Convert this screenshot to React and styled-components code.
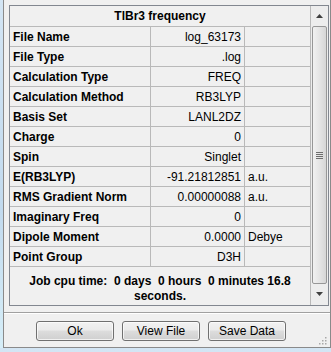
import styled, { createGlobalStyle } from "styled-components";

const GlobalStyle = createGlobalStyle`
  html, body {
    margin: 0;
    padding: 0;
    background: linear-gradient(180deg, #d3e5f4 0%, #c2daee 60%, #d6eef8 100%);
    font-family: "Liberation Sans", Arial, sans-serif;
  }
`;

const Window = styled.div`
  position: relative;
  margin-left: 3px;
  width: 328px;
  height: 348px;
  box-sizing: border-box;
  background: #f0f0f0;
  border: 1px solid #8a8a8a;
  border-top: none;
  padding: 5px 0 0 5px;
  display: flex;
  flex-direction: column;
`;

const Panel = styled.div`
  width: 320px;
  height: 301px;
  box-sizing: border-box;
  border: 1px solid #828790;
  display: flex;
  background: #f0f0f0;
`;

const Table = styled.div`
  width: 301px;
  display: flex;
  flex-direction: column;
`;

const TitleRow = styled.div`
  height: 21px;
  box-sizing: border-box;
  border-bottom: 1px solid #b9b9b9;
  border-right: 1px solid #b9b9b9;
  display: flex;
  align-items: center;
  justify-content: center;
  font-size: 12px;
  font-weight: bold;
  color: #000;
`;

const Row = styled.div`
  display: grid;
  grid-template-columns: 141px 94px 66px;
  height: 20px;
`;

const Cell = styled.div`
  box-sizing: border-box;
  border-right: 1px solid #b9b9b9;
  border-bottom: 1px solid #b9b9b9;
  display: flex;
  align-items: center;
  font-size: 12px;
  color: #000;
  white-space: nowrap;
  overflow: hidden;
  font-weight: ${(p) => (p.$bold ? "bold" : "normal")};
  justify-content: ${(p) => (p.$right ? "flex-end" : "flex-start")};
  padding: ${(p) => (p.$right ? "0 3px 0 0" : "0 0 0 3px")};
`;

const CpuTime = styled.div`
  flex: 1;
  box-sizing: border-box;
  border-right: 1px solid #b9b9b9;
  padding: 7px 12px 0 12px;
  font-size: 12px;
  font-weight: bold;
  line-height: 15px;
  text-align: center;
  white-space: pre-wrap;
  color: #000;
`;

const Scrollbar = styled.div`
  width: 17px;
  display: flex;
  flex-direction: column;
  align-items: center;
  background: #ededed;
`;

const ArrowBox = styled.div`
  height: ${(p) => p.$h}px;
  width: 17px;
  display: flex;
  align-items: center;
  justify-content: center;
`;

const Thumb = styled.div`
  width: 15px;
  height: 258px;
  box-sizing: border-box;
  border: 1px solid #979797;
  border-radius: 2px;
  background: linear-gradient(90deg, #f1f1f1 0%, #e6e6e6 45%, #d6d6d6 100%);
  display: flex;
  align-items: center;
  justify-content: center;
`;

const Grip = styled.div`
  width: 7px;
  display: flex;
  flex-direction: column;
  gap: 1px;
`;

const GripLine = styled.div`
  height: 1px;
  background: #6e6e6e;
`;

const Separator = styled.div`
  margin: 6px 0 0 -5px;
  height: 0;
  border-top: 1px solid #a0a0a0;
  border-bottom: 1px solid #ffffff;
`;

const ButtonRow = styled.div`
  display: flex;
  gap: 8px;
  margin: 7px 0 0 27px;
`;

const Button = styled.button`
  width: 78px;
  height: 20px;
  box-sizing: border-box;
  border: 1px solid #707070;
  border-radius: 3px;
  background: linear-gradient(180deg, #f2f2f2 0%, #ebebeb 45%, #dddddd 50%, #cfcfcf 100%);
  box-shadow: inset 0 0 0 1px rgba(255, 255, 255, 0.7);
  font-family: "Liberation Sans", Arial, sans-serif;
  font-size: 12px;
  color: #000;
  padding: 0;
`;

const ResizeGrip = styled.svg`
  position: absolute;
  right: 3px;
  bottom: 2px;
`;

const rows = [
  ["File Name", "log_63173", ""],
  ["File Type", ".log", ""],
  ["Calculation Type", "FREQ", ""],
  ["Calculation Method", "RB3LYP", ""],
  ["Basis Set", "LANL2DZ", ""],
  ["Charge", "0", ""],
  ["Spin", "Singlet", ""],
  ["E(RB3LYP)", "-91.21812851", "a.u."],
  ["RMS Gradient Norm", "0.00000088", "a.u."],
  ["Imaginary Freq", "0", ""],
  ["Dipole Moment", "0.0000", "Debye"],
  ["Point Group", "D3H", ""],
];

const App = () => {
  return (
    <>
      <GlobalStyle />
      <Window>
        <Panel>
          <Table>
            <TitleRow>TlBr3 frequency</TitleRow>
            {rows.map(([label, value, unit]) => (
              <Row key={label}>
                <Cell $bold>{label}</Cell>
                <Cell $right>{value}</Cell>
                <Cell>{unit}</Cell>
              </Row>
            ))}
            <CpuTime>{"Job cpu time:  0 days  0 hours  0 minutes 16.8 seconds."}</CpuTime>
          </Table>
          <Scrollbar>
            <ArrowBox $h={20}>
              <svg width="7" height="4" viewBox="0 0 7 4">
                <path d="M3.5 0 L7 4 L0 4 Z" fill="#404040" />
              </svg>
            </ArrowBox>
            <Thumb>
              <Grip>
                <GripLine />
                <GripLine />
                <GripLine />
                <GripLine />
              </Grip>
            </Thumb>
            <ArrowBox $h={20}>
              <svg width="7" height="4" viewBox="0 0 7 4">
                <path d="M0 0 L7 0 L3.5 4 Z" fill="#404040" />
              </svg>
            </ArrowBox>
          </Scrollbar>
        </Panel>
        <Separator />
        <ButtonRow>
          <Button>Ok</Button>
          <Button>View File</Button>
          <Button>Save Data</Button>
        </ButtonRow>
        <ResizeGrip width="9" height="9" viewBox="0 0 9 9">
          {[
            [7, 1],
            [4, 4],
            [7, 4],
            [1, 7],
            [4, 7],
            [7, 7],
          ].map(([x, y]) => (
            <rect key={`${x}-${y}`} x={x} y={y} width="1.5" height="1.5" fill="#a8a8a8" />
          ))}
        </ResizeGrip>
      </Window>
    </>
  );
};

export default App;
